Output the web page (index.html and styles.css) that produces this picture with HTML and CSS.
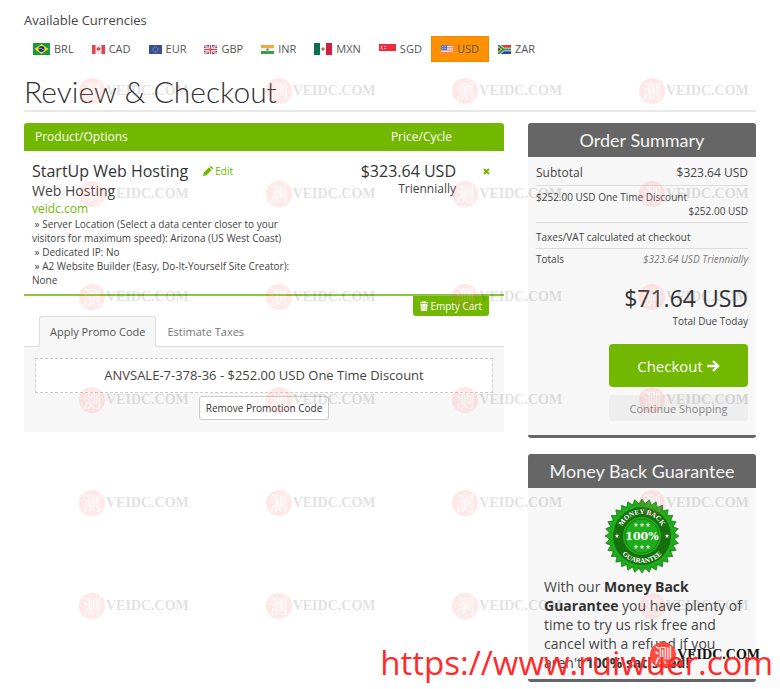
FILE: index.html
```html
<!DOCTYPE html>
<html lang="en">
<head>
  <meta charset="UTF-8">
  <title>Review &amp; Checkout</title>
  <link rel="stylesheet" href="styles.css">
</head>
<body>
  <div class="page">
    <p class="currency-label">Available Currencies</p>
    <nav class="currencies">
      <a href="#brl"><svg width="17" height="12" viewBox="0 0 17 12"><rect width="17" height="12" fill="#159a3c"/><path d="M1.500 6 8.500 1l7 5-7 5z" fill="#f7dc2c"/><circle cx="8.500" cy="6" r="3" fill="#28366f"/><path d="M5.800 5.300q3-.5 5.200 2" stroke="#bcd" stroke-width=".7" fill="none"/></svg>BRL</a>
      <a href="#cad"><svg width="13" height="9" viewBox="0 0 13 9"><rect width="13" height="9" fill="#f6eaea"/><path d="M0 0h3.500v9H0zM9.500 0H13v9H9.500zM6.500 1.500l.8 1.300 1.400-.1-.5 1.800-1.300 1.300H6.100L4.800 4.500l-.5-1.800 1.400.1z" fill="#e0444c"/></svg>CAD</a>
      <a href="#eur"><svg width="13" height="9" viewBox="0 0 13 9"><rect width="13" height="9" fill="#3a4f9c"/><circle cx="6.500" cy="4.500" r="2.500" fill="none" stroke="#b8b878" stroke-width="1" stroke-dasharray="1 .7"/></svg>EUR</a>
      <a href="#gbp"><svg width="13" height="9" viewBox="0 0 13 9"><rect width="13" height="9" fill="#4a5ca8"/><path d="M0 0l13 9M13 0L0 9" stroke="#f3e6ee" stroke-width="2"/><path d="M0 0l13 9M13 0L0 9" stroke="#e0606c" stroke-width=".7"/><path d="M6.500 0v9M0 4.500h13" stroke="#fff" stroke-width="3"/><path d="M6.500 0v9M0 4.500h13" stroke="#e0444c" stroke-width="1.500"/></svg>GBP</a>
      <a href="#inr"><svg width="13" height="9" viewBox="0 0 13 9"><rect width="13" height="9" fill="#f2f2ee"/><path d="M0 0h13v3H0z" fill="#f3a83a"/><path d="M0 6h13v3H0z" fill="#3da048"/><circle cx="6.500" cy="4.500" r="1.300" fill="#7c86b8"/></svg>INR</a>
      <a href="#mxn"><svg width="18" height="12" viewBox="0 0 18 12"><rect width="18" height="12" fill="#fff"/><path d="M0 0h6v12H0z" fill="#0b7050"/><path d="M12 0h6v12h-6z" fill="#d01f3a"/><circle cx="9" cy="6" r="1.700" fill="#9a8050"/></svg>MXN</a>
      <a href="#sgd"><svg class="flag-top" width="17" height="7" viewBox="0 0 17 7"><rect width="17" height="7" fill="#ee2d3c"/><path d="M4 1.500a2 2 0 1 0 0 4 2.400 2.400 0 0 1 0-4z" fill="#fff"/><path d="M5 2.500h2M5 4.500h2" stroke="#fbb" stroke-width=".8"/></svg>SGD</a>
      <a href="#usd" class="active"><svg width="12" height="8" viewBox="0 0 12 8"><rect width="12" height="8" fill="#f8e6e4"/><path d="M0 .5h12M0 2.800h12M0 5.100h12M0 7.400h12" stroke="#e57070"/><rect width="6" height="5" fill="#4b78cc"/><path d="M1 1.500h4M1 3.500h4" stroke="#b8cdf0" stroke-width=".7" stroke-dasharray="1 .6"/></svg>USD</a>
      <a href="#zar"><svg width="13" height="9" viewBox="0 0 13 9"><path d="M0 0h13v4.500H0z" fill="#e03c38"/><path d="M0 4.500h13V9H0z" fill="#2c45a5"/><path d="M0 0l5.500 4.500H13M0 9l5.500-4.500" stroke="#fff" stroke-width="3.400" fill="none"/><path d="M0 0l5.500 4.500H13M0 9l5.500-4.500" stroke="#2f9450" stroke-width="2" fill="none"/><path d="M0 2l3 2.500L0 7z" fill="#222" stroke="#e5b93c" stroke-width=".7"/></svg>ZAR</a>
    </nav>

    <h1>Review &amp; Checkout</h1>

    <div class="columns">
      <main>
        <table class="cart">
          <thead>
            <tr><th>Product/Options</th><th class="price">Price/Cycle</th><th class="remove"></th></tr>
          </thead>
          <tbody>
            <tr>
              <td>
                <div class="product">
                  <span class="name">StartUp Web Hosting</span>
                  <a href="#edit"><svg width="10" height="10" viewBox="0 0 10 10"><path d="M0 10l.8-3.500L6 1.300 8.700 4 3.500 9.200zM6.600.7l.5-.5q.6-.4 1.200 0l1.400 1.400q.5.600 0 1.200l-.5.500z" fill="currentColor"/></svg>Edit</a>
                </div>
                <div class="group">Web Hosting</div>
                <div class="domain">veidc.com</div>
                <div class="options">
                  &nbsp;» Server Location (Select a data center closer to your visitors for maximum speed): Arizona (US West Coast)<br>
                  &nbsp;» Dedicated IP: No<br>
                  &nbsp;» A2 Website Builder (Easy, Do-It-Yourself Site Creator): None
                </div>
              </td>
              <td class="price">
                <div class="amount">$323.64 USD</div>
                <div class="cycle">Triennially</div>
              </td>
              <td class="remove">
                <button type="button" aria-label="Remove"><svg width="7" height="7" viewBox="0 0 7 7"><path d="M1 1l5 5M6 1L1 6" stroke="currentColor" stroke-width="2"/></svg></button>
              </td>
            </tr>
          </tbody>
        </table>

        <div class="empty-row">
          <button type="button" class="empty-cart"><svg width="8" height="10" viewBox="0 0 8 10"><path d="M0 1h2.500V0h3v1H8v1.300H0zM.5 3h7L7 10H1z" fill="currentColor"/><path d="M2.800 4v5M5.200 4v5" stroke="#a9d64c" stroke-width=".7"/></svg>Empty Cart</button>
        </div>

        <div class="tabs">
          <button type="button" class="active">Apply Promo Code</button>
          <button type="button">Estimate Taxes</button>
        </div>
        <div class="promo">
          <div class="promo-code">ANVSALE-7-378-36 - $252.00 USD One Time Discount</div>
          <button type="button">Remove Promotion Code</button>
        </div>
      </main>

      <aside>
        <section class="panel summary">
          <h2>Order Summary</h2>
          <div class="panel-body">
            <div class="line subtotal"><span>Subtotal</span><span>$323.64 USD</span></div>
            <div class="line discount"><span>$252.00 USD One Time Discount</span><span class="right">$252.00 USD</span></div>
            <div class="line taxes"><span>Taxes/VAT calculated at checkout</span></div>
            <div class="line totals"><span>Totals</span><em>$323.64 USD Triennially</em></div>
            <div class="total-due">$71.64 USD</div>
            <div class="due-label">Total Due Today</div>
            <div class="actions">
              <button type="button" class="checkout">Checkout <svg width="13" height="12" viewBox="0 0 13 12"><path d="M0 6h11M6 1l5 5-5 5" fill="none" stroke="currentColor" stroke-width="2.400"/></svg></button>
              <button type="button" class="continue">Continue Shopping</button>
            </div>
          </div>
        </section>

        <section class="panel guarantee">
          <h2>Money Back Guarantee</h2>
          <div class="panel-body">
            <svg class="seal" width="74" height="74" viewBox="-37 -37 74 74">
              <defs>
                <path id="arc-top" d="M-22 0a22 22 0 0 1 44 0"/>
                <path id="arc-bottom" d="M-27 0a27 27 0 0 0 54 0"/>
                <path id="star" d="M0-2.400.6-.8 2.300-.7 1 .3 1.400 2 0 1.100-1.400 2-1 .3-2.300-.7-.6-.8z" fill="#fff"/>
                <path id="spike" d="M-4-31L0-37l4 6z"/>
              </defs>
              <g id="spikes" fill="#1fae1b" stroke="#167313" stroke-width=".7"></g>
              <circle r="32" fill="#1fae1b"/>
              <circle r="29" fill="#17700f"/>
              <circle r="19" fill="#1fae1b"/>
              <circle r="17" fill="none" stroke="#17700f" stroke-width=".8"/>
              <text class="seal-ring"><textPath href="#arc-top" startOffset="50%">MONEY BACK</textPath></text>
              <text class="seal-ring"><textPath href="#arc-bottom" startOffset="50%">GUARANTEE</textPath></text>
              <text class="seal-main" y="4">100%</text>
              <use href="#star" x="-6" y="-11"/><use href="#star" y="-11"/><use href="#star" x="6" y="-11"/>
              <use href="#star" x="-6" y="11"/><use href="#star" y="11"/><use href="#star" x="6" y="11"/>
              <use href="#star" x="-25"/><use href="#star" x="25"/>
            </svg>
            <p>With our <b>Money Back Guarantee</b> you have plenty of time to try us risk free and cancel with a refund if you aren't <b>100% satisfied!</b></p>
          </div>
        </section>
      </aside>
    </div>
  </div>

  <div class="watermarks" id="watermarks"></div>
  <div class="mark mark-dark"><span class="stamp">测</span>VEIDC.COM</div>
  <div class="site-url">https://www.ruiwuer.com</div>

  <script>
    const marks = document.getElementById('watermarks');
    for (let i = 0; i < 24; i++) {
      marks.innerHTML += '<div class="mark"><span class="stamp">测</span>VEIDC.COM</div>';
    }

    let spikes = '';
    for (let i = 0; i < 32; i++) {
      spikes += `<use href="#spike" transform="rotate(${i * 11.25})"/>`;
    }
    document.getElementById('spikes').innerHTML = spikes;
  </script>
</body>
</html>
```
FILE: styles.css
```css
* {
  box-sizing: border-box;
}

body {
  margin: 0;
  position: relative;
  min-height: 100vh;
  overflow-x: hidden;
  background: #fff;
  color: #444;
  font-family: "Open Sans", "Noto Sans", sans-serif;
  font-size: 12px;
  line-height: 16px;
}

button {
  font-family: inherit;
  font-size: 11px;
  border: none;
  padding: 0;
  cursor: pointer;
}

a {
  text-decoration: none;
}

.page {
  padding: 12px 24px 4px;
}

.currency-label {
  margin: 0 0 8px;
  font-size: 13px;
}

.currencies {
  display: flex;
}

.currencies a {
  display: flex;
  align-items: center;
  gap: 4px;
  height: 26px;
  padding: 0 9px;
  font-size: 11px;
  color: #555;
}

.currencies a.active {
  background: #ff9100;
  border: 1px solid #f08800;
}

.flag-top {
  margin-bottom: 4px;
}

h1 {
  margin: 12px 0 11px;
  height: 38px;
  border-bottom: 2px solid #e8e8e8;
  font-family: Lato, sans-serif;
  font-weight: 300;
  font-size: 30px;
  line-height: 34px;
  color: #333;
}

.columns {
  display: grid;
  grid-template-columns: minmax(0, 1fr) 228px;
  gap: 24px;
  align-items: start;
}

.cart {
  width: 100%;
  border-collapse: separate;
  border-spacing: 0;
  border-bottom: 2px solid #8cc63f;
}

.cart th {
  height: 28px;
  padding: 0 11px;
  background: #72b800;
  color: #fff;
  font-weight: 400;
  text-align: left;
}

.cart th:first-child {
  border-top-left-radius: 3px;
}

.cart th:last-child {
  border-top-right-radius: 3px;
}

.cart td {
  height: 143px;
  padding: 10px 8px 6px;
  vertical-align: top;
}

.cart .price {
  width: 150px;
  text-align: right;
}

.cart th.price {
  padding-right: 12px;
}

.cart .remove {
  width: 40px;
}

.cart td.remove {
  padding: 9px 8px 6px 16px;
}

.remove button {
  display: block;
  padding: 3px;
  background: none;
  color: #72b800;
}

.product {
  display: flex;
  align-items: center;
  gap: 15px;
  line-height: 20px;
}

.product a {
  display: flex;
  align-items: center;
  gap: 2px;
  font-size: 10px;
  color: #72b800;
}

.name, .amount {
  font-size: 16px;
  line-height: 20px;
  color: #333;
}

.group {
  font-size: 14px;
  line-height: 20px;
}

.domain {
  line-height: 16px;
  color: #72b800;
}

.options {
  max-width: 262px;
  font-size: 10px;
  line-height: 14px;
}

.empty-row {
  display: flex;
  justify-content: flex-end;
  padding-right: 15px;
}

.empty-cart {
  display: flex;
  align-items: center;
  gap: 2px;
  height: 20px;
  padding: 0 7px;
  border-radius: 0 0 3px 3px;
  background: #72b800;
  color: #fff;
  font-size: 10px;
}

.tabs {
  display: flex;
  padding-left: 15px;
  border-bottom: 1px solid #ddd;
}

.tabs button {
  height: 31px;
  margin-bottom: -1px;
  padding: 0 10px;
  border: 1px solid transparent;
  background: none;
  color: #777;
}

.tabs button.active {
  border-color: #ddd;
  border-bottom-color: #f7f7f7;
  border-radius: 3px 3px 0 0;
  background: #f7f7f7;
  color: #555;
}

.promo {
  display: flex;
  flex-direction: column;
  align-items: center;
  gap: 3px;
  padding: 11px 11px 12px;
  background: #f7f7f7;
}

.promo-code {
  width: 100%;
  border: 1px dashed #ccc;
  background: #fff;
  font-size: 13px;
  line-height: 33px;
  text-align: center;
}

.promo button {
  height: 24px;
  padding: 0 6px;
  border: 1px solid #ccc;
  border-radius: 3px;
  background: #fff;
  color: #333;
  font-size: 10px;
}

.panel {
  margin-bottom: 16px;
  border-bottom: 3px solid #666;
  border-radius: 3px;
  background: #f7f7f7;
}

.panel h2 {
  margin: 0;
  border-radius: 3px 3px 0 0;
  background: #666;
  color: #f4f4f4;
  font-family: Lato, sans-serif;
  font-size: 18px;
  font-weight: 400;
  line-height: 34px;
  text-align: center;
}

.summary .panel-body {
  padding: 6px 8px 14px;
}

.line {
  display: flex;
  justify-content: space-between;
  font-size: 10px;
  line-height: 14px;
  border-bottom: 1px solid #ddd;
}

.subtotal {
  font-size: 12px;
  line-height: 20px;
  padding-bottom: 2px;
}

.discount {
  flex-direction: column;
  padding: 4px 0;
}

.right {
  text-align: right;
}

.taxes {
  padding: 7px 0 4px;
}

.totals {
  padding-top: 3px;
  border-bottom: none;
}

.totals em {
  font-size: 10px;
  color: #777;
}

.total-due {
  margin-top: 18px;
  font-size: 23px;
  line-height: 28px;
  text-align: right;
  color: #333;
}

.due-label {
  margin-top: 1px;
  font-size: 10px;
  text-align: right;
}

.actions {
  display: flex;
  flex-direction: column;
  gap: 8px;
  width: 139px;
  margin: 15px 0 0 auto;
}

.checkout {
  height: 43px;
  border-radius: 4px;
  background: #72b800;
  color: #fff;
  font-size: 15px;
}

.continue {
  height: 26px;
  border-radius: 3px;
  background: #eee;
  color: #888;
}

.guarantee .panel-body {
  padding: 11px 8px 7px;
}

.seal {
  display: block;
  margin: 0 auto 4px;
}

.seal-ring {
  fill: #fff;
  font-family: "Liberation Serif", serif;
  font-size: 7px;
  font-weight: 700;
  text-anchor: middle;
}

.seal-main {
  fill: #fff;
  font-family: "DejaVu Serif", serif;
  font-size: 11px;
  font-weight: 700;
  text-anchor: middle;
}

.guarantee p {
  margin: 0;
  padding-left: 8px;
  font-size: 14px;
  line-height: 19px;
}

.guarantee b {
  color: #333;
}

/* overlay marks */
.watermarks {
  position: absolute;
  inset: 0;
  display: grid;
  grid-template-columns: repeat(3, 1fr) 141px;
  grid-auto-rows: 103px;
  padding: 77px 0 0 79px;
  overflow: hidden;
  opacity: 0.12;
  pointer-events: none;
}

.mark {
  display: flex;
  align-items: center;
  gap: 1px;
  height: 27px;
  color: #111;
  font-family: "Liberation Serif", serif;
  font-size: 14px;
  font-weight: 700;
}

.stamp {
  width: 26px;
  height: 26px;
  border-radius: 50%;
  background: #ff4a40;
  color: #fff;
  font-family: "Noto Sans CJK SC", sans-serif;
  font-size: 18px;
  font-weight: 400;
  line-height: 25px;
  text-align: center;
}

.mark-dark {
  position: absolute;
  right: 20px;
  top: 641px;
  pointer-events: none;
}

.site-url {
  position: absolute;
  right: 7px;
  top: 640px;
  color: #ff2a2a;
  font-size: 33px;
  line-height: 46px;
}
```
